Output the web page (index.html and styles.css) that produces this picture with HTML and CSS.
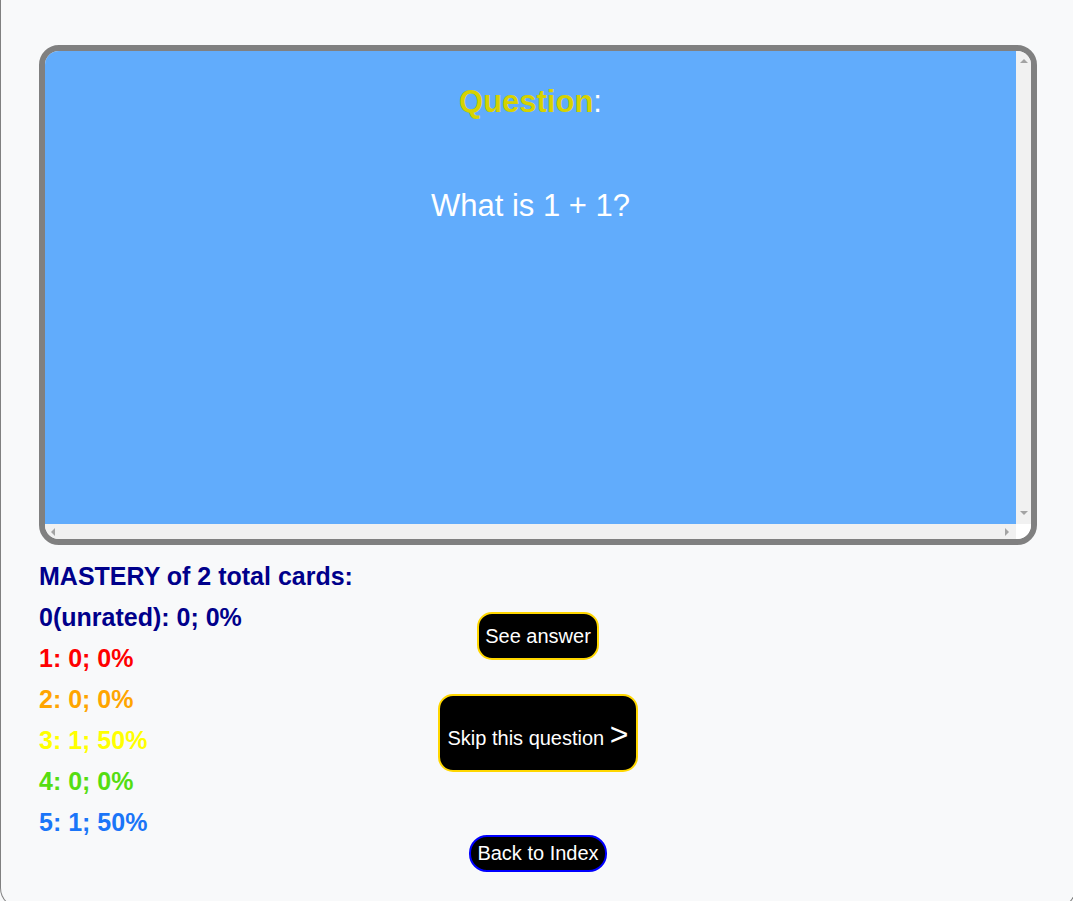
FILE: index.html
```html
<!DOCTYPE html>
<html>
<head>
<meta charset="utf-8">
<title>Flashcards</title>
<link rel="stylesheet" href="styles.css">
</head>
<body>
<div class="page">
  <div class="card">
    <div class="card-body">
      <h2 class="q-title"><span class="q-word">Question</span>:</h2>
      <p class="q-text">What is 1 + 1?</p>
    </div>
    <div class="vbar"><span class="tri tri-up"></span><span class="tri tri-down"></span></div>
    <div class="hbar"><span class="tri tri-left"></span><span class="tri tri-right"></span></div>
    <div class="corner"></div>
  </div>
  <div class="bottom">
    <div class="stats">
      <div class="stat s-head">MASTERY of 2 total cards:</div>
      <div class="stat s0">0(unrated): 0; 0%</div>
      <div class="stat s1">1: 0; 0%</div>
      <div class="stat s2">2: 0; 0%</div>
      <div class="stat s3">3: 1; 50%</div>
      <div class="stat s4">4: 0; 0%</div>
      <div class="stat s5">5: 1; 50%</div>
    </div>
    <div class="actions">
      <button class="btn btn-see">See answer</button>
      <button class="btn btn-skip">Skip this question <span class="arrow">&gt;</span></button>
      <button class="btn btn-back">Back to Index</button>
    </div>
    <div class="spacer"></div>
  </div>
</div>
</body>
</html>
```
FILE: styles.css
```css
html, body {
  margin: 0;
  padding: 0;
  overflow: hidden;
  background: #f8f9fa;
}

.page {
  box-sizing: border-box;
  width: 1076px;
  height: 908px;
  border: 1px solid #808080;
  border-top: none;
  border-radius: 0 0 20px 20px;
  padding: 45px 0 0 38px;
  font-family: "Liberation Sans", Arial, sans-serif;
}

.card {
  box-sizing: border-box;
  width: 998px;
  height: 500px;
  border: 6px solid #808080;
  border-radius: 20px;
  overflow: hidden;
  display: grid;
  grid-template-columns: 1fr 15px;
  grid-template-rows: 1fr 15px;
}

.card-body {
  background: #61acfc;
  text-align: center;
  color: #ffffff;
  overflow: hidden;
}

.vbar {
  background: #f1f1f1;
  display: flex;
  flex-direction: column;
  justify-content: space-between;
  align-items: center;
  padding: 8px 0 9px 1px;
}

.hbar {
  background: #f1f1f1;
  display: flex;
  justify-content: space-between;
  align-items: center;
  padding: 0 7px 0 6px;
}

.corner {
  background: #ffffff;
}

.tri {
  display: block;
  width: 0;
  height: 0;
}

.tri-up {
  border-left: 4px solid transparent;
  border-right: 4px solid transparent;
  border-bottom: 4px solid #a3a3a3;
}

.tri-down {
  border-left: 4px solid transparent;
  border-right: 4px solid transparent;
  border-top: 4px solid #a3a3a3;
}

.tri-left {
  border-top: 4px solid transparent;
  border-bottom: 4px solid transparent;
  border-right: 4px solid #a3a3a3;
}

.tri-right {
  border-top: 4px solid transparent;
  border-bottom: 4px solid transparent;
  border-left: 4px solid #a3a3a3;
}

.q-title {
  margin: 33px 0 0 0;
  font-size: 31px;
  font-weight: normal;
  line-height: 36px;
}

.q-word {
  color: #d6d200;
  font-weight: bold;
}

.q-text {
  margin: 68px 0 0 0;
  font-size: 31px;
  line-height: 36px;
}

.bottom {
  width: 998px;
  display: grid;
  grid-template-columns: 1fr auto 1fr;
  margin-top: 11px;
}

.stat {
  font-size: 25px;
  font-weight: bold;
  line-height: 41px;
  white-space: nowrap;
}

.s-head, .s0 { color: #00008b; }
.s1 { color: #ff0000; }
.s2 { color: #ffa500; }
.s3 { color: #ffff00; }
.s4 { color: #55dd11; }
.s5 { color: #1a75f8; }

.actions {
  display: flex;
  flex-direction: column;
  align-items: center;
  padding-top: 56px;
}

.btn {
  box-sizing: border-box;
  background: #000000;
  color: #ffffff;
  font-family: "Liberation Sans", Arial, sans-serif;
  font-size: 20px;
  line-height: 23px;
  margin: 0;
  cursor: pointer;
}

.btn-see {
  border: 2px solid #ffd700;
  border-radius: 15px;
  padding: 10.5px 6px;
}

.btn-skip {
  margin-top: 34px;
  border: 2px solid #ffd700;
  border-radius: 15px;
  padding: 25px 7px 19px 7px;
  height: 78px;
}

.arrow {
  font-size: 32px;
  line-height: 23px;
}

.btn-back {
  margin-top: 63px;
  border: 2px solid #0000ff;
  border-radius: 18px;
  padding: 5px 6px;
}
```
